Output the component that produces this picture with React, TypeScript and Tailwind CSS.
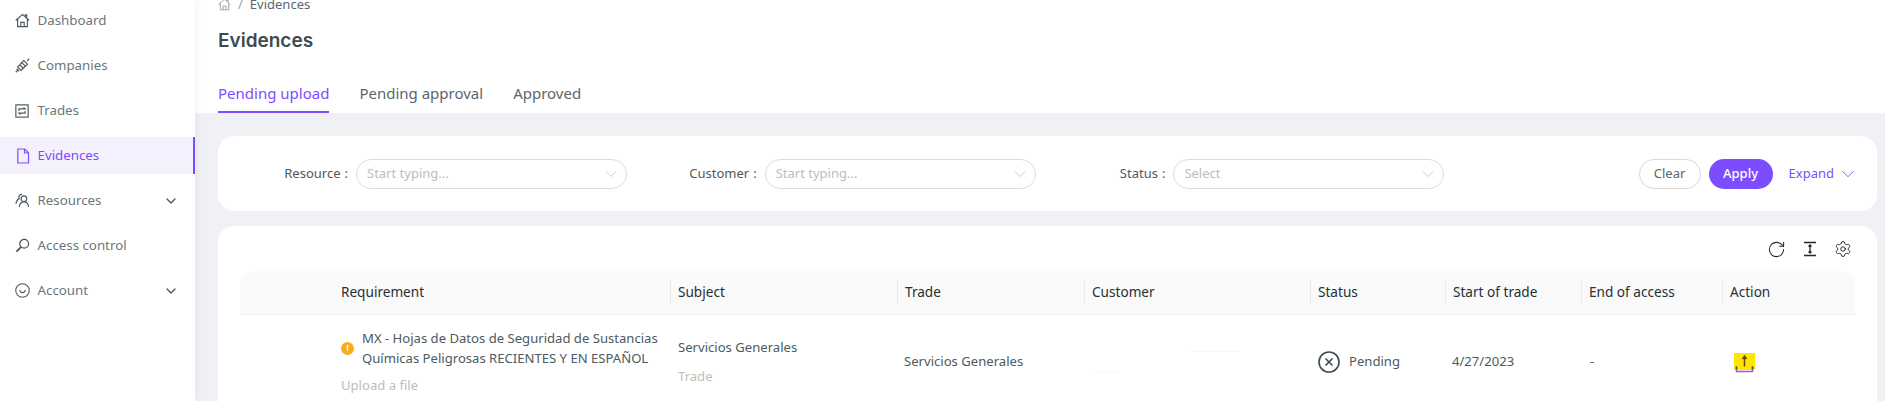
import { ChevronDown, RotateCw, Settings } from "lucide-react";

const font = "font-['Noto_Sans','Open_Sans',sans-serif]";

const IconHome = ({ className }: { className?: string }) => (
  <svg viewBox="0 0 16 16" fill="none" stroke="currentColor" strokeWidth="1.2" className={className}>
    <path d="M.8 8 8 1.500 15.200 8M2.800 6.500V14.500h10.400V6.500M6.200 14.500V10h3.600v4.500M11 3.500V2h1.500v2.800" />
  </svg>
);

const IconPlug = () => (
  <svg viewBox="0 0 16 16" fill="none" stroke="currentColor" strokeWidth="1.300" className="h-[15px] w-[15px]">
    <path d="M.8 15.200 3 13M15.200.8 13 3M2.800 9.500l3.700 3.700 2.300-2.300-3.700-3.700zM7.200 5l3.800 3.800 2.200-2.200-3.800-3.800zM5.500 6.800 7.200 5M9 10.600l2-1.800M1.800 11.500l2.700 2.700" />
  </svg>
);

const IconTrades = () => (
  <svg viewBox="0 0 16 16" fill="none" stroke="currentColor" strokeWidth="1.300" className="h-[14px] w-[14px]">
    <rect x="1" y="1" width="14" height="14" />
    <path d="M4.500 8V5.500h7L9.800 4M11.500 8v2.500h-7L6.200 12" />
  </svg>
);

const IconFile = () => (
  <svg viewBox="0 0 16 16" fill="none" stroke="currentColor" strokeWidth="1.200" className="h-[16px] w-[16px]">
    <path d="M2.800 1h7L13.500 4.800V15H2.800zM9.500 1v4h4" />
  </svg>
);

const IconUser = () => (
  <svg viewBox="0 0 16 16" fill="none" stroke="currentColor" strokeWidth="1.200" className="h-[15px] w-[15px]">
    <circle cx="9.500" cy="6" r="3" />
    <path d="M4.500 15c.3-3 2.200-5.500 5-5.500s4.700 2.500 5 5.500M7.500 1.500A3 3 0 0 0 4.500 6c-2 1-3.200 3-3.500 5.500" />
  </svg>
);

const IconKey = () => (
  <svg viewBox="0 0 16 16" fill="none" stroke="currentColor" strokeWidth="1.300" className="h-[15px] w-[15px]">
    <circle cx="9.800" cy="6.200" r="4.700" />
    <path d="M6.300 9.700 1.500 14.500" strokeWidth="2" />
  </svg>
);

const IconSmile = () => (
  <svg viewBox="0 0 16 16" fill="none" stroke="currentColor" strokeWidth="1.100" className="h-[15px] w-[15px]">
    <circle cx="8" cy="8" r="7.200" />
    <path d="M4.800 7.500c.8 2 1.900 3 3.200 3s2.400-1 3.200-3" />
  </svg>
);

const nav = [
  { label: "Dashboard", icon: <IconHome className="h-[15px] w-[15px]" /> },
  { label: "Companies", icon: <IconPlug /> },
  { label: "Trades", icon: <IconTrades /> },
  { label: "Evidences", icon: <IconFile />, active: true },
  { label: "Resources", icon: <IconUser />, caret: true },
  { label: "Access control", icon: <IconKey /> },
  { label: "Account", icon: <IconSmile />, caret: true },
];

const Sidebar = () => (
  <aside className="relative z-10 flex h-[401px] w-[195px] shrink-0 flex-col gap-[8px] bg-white pt-[2px] text-[13.3px] text-[#6b767c] shadow-[2px_0_8px_rgba(0,0,0,0.05)]">
    {nav.map((item) => (
      <div
        key={item.label}
        className={
          item.active
            ? "flex h-[37px] items-center border-r-2 border-[#7c4dff] bg-[#f5f0fe] pl-[15px] pr-[14px] text-[#7c4dff]"
            : "flex h-[37px] items-center pl-[15px] pr-[16px]"
        }
      >
        <span className={item.active ? "flex w-[22.5px]" : "flex w-[22.5px] text-[#4a555c]"}>{item.icon}</span>
        <span className="flex-1">{item.label}</span>
        {item.caret && <ChevronDown className="h-[16px] w-[16px] text-[#4a555c]" />}
      </div>
    ))}
  </aside>
);

const Field = ({ label, placeholder }: { label: string; placeholder: string }) => (
  <div className="flex w-[408.7px] items-center">
    <span className="flex w-[116px] justify-end gap-[4px] pr-[8px] text-[13px] text-[#4d5a62]">
      <span>{label}</span>
      <span>:</span>
    </span>
    <div className="flex h-[30px] w-[271px] items-center justify-between rounded-full border border-[#dcdcdc] pl-[10px] pr-[5px] text-[13px] text-[#bdbdbd]">
      <span>{placeholder}</span>
      <ChevronDown strokeWidth={1} className="h-[20px] w-[20px] text-[#c4c4c4]" />
    </div>
  </div>
);

const columns = ["", "Requirement", "Subject", "Trade", "Customer", "Status", "Start of trade", "End of access", "Action"];

const gridCols = "grid grid-cols-[93px_337px_227px_187px_226px_135px_136px_141px_132px]";

const UploadIcon = () => (
  <div className="relative h-[17px] w-[21px] bg-[#ffe600]">
    <svg viewBox="0 0 21 20" fill="none" className="absolute left-0 top-0 h-[20px] w-[21px]">
      <path d="M2.500 13.500v5h16v-5" stroke="#8c5cff" strokeWidth="1.500" />
      <path d="M2.500 13.500v2.500M18.500 13.500v2.500" stroke="#6b4a00" strokeWidth="1.500" />
      <path d="M10.500 13.500V3M8.500 6l2-3 2 3" stroke="#6b4a00" strokeWidth="1.500" />
    </svg>
  </div>
);

export default function App() {
  return (
    <div className={`flex h-[401px] w-[1885px] overflow-hidden bg-[#f0f1f5] ${font}`}>
      <Sidebar />
      <main className="flex min-w-0 flex-1 flex-col">
        <header className="h-[113px] bg-white px-[23px]">
          <div className="flex h-[9px] items-center gap-[7px] text-[13px] text-[#5b666d]">
            <IconHome className="h-[13px] w-[13px] text-[#9aa1a6]" />
            <span className="text-[#9aa1a6]">/</span>
            <span>Evidences</span>
          </div>
          <h1 className="mt-[18px] h-[28px] font-['Inter',sans-serif] text-[19px] font-semibold leading-[28px] text-[#3d4a52]">
            Evidences
          </h1>
          <nav className="mt-[27px] flex gap-[30px] text-[15px] text-[#5b666d]">
            <span className="h-[31px] border-b-2 border-[#7c4dff] text-[#7c4dff]">Pending upload</span>
            <span>Pending approval</span>
            <span>Approved</span>
          </nav>
        </header>

        <div className="flex flex-col gap-[15px] pl-[23px] pr-[8px] pt-[23px]">
          <section className="flex h-[75px] items-center rounded-[16px] bg-white pl-[22px] pr-[18px]">
            <Field label="Resource" placeholder="Start typing..." />
            <Field label="Customer" placeholder="Start typing..." />
            <Field label="Status" placeholder="Select" />
            <div className="ml-auto flex items-center text-[13px]">
              <button className="h-[30px] w-[62px] rounded-full border border-[#d9d9d9] text-[#5b666d]">Clear</button>
              <button className="ml-[8px] h-[30px] w-[64px] rounded-full bg-[#7c4dff] font-medium text-white">Apply</button>
              <span className="ml-[16px] text-[#7c4dff]">Expand</span>
              <ChevronDown strokeWidth={1} className="ml-[3px] h-[22px] w-[22px] text-[#7c4dff]" />
            </div>
          </section>

          <section className="h-[200px] rounded-[16px] bg-white px-[22px]">
            <div className="flex h-[45px] items-center justify-end gap-[16px] pr-[3.5px] pt-[1px] text-[#1f2a30]">
              <RotateCw strokeWidth={1.300} className="h-[19px] w-[19px]" />
              <svg viewBox="0 0 16 16" fill="none" stroke="currentColor" strokeWidth="1.300" className="h-[16px] w-[16px]">
                <path d="M2 1.500h12M2 14.500h12M8 4v8M6.500 5.500 8 4l1.500 1.500M6.500 10.500 8 12l1.500-1.500" />
              </svg>
              <Settings strokeWidth={1.300} className="h-[18px] w-[18px]" />
            </div>

            <div className={`${gridCols} h-[44px] items-center rounded-t-[14px] border-b border-[#eeeeee] bg-[#fafafa] text-[13.6px] text-[#262f35]`}>
              {columns.map((c, i) => (
                <div key={i} className={i > 1 ? "border-l border-[#ebebeb] py-[2px] pl-[7px]" : "pl-[8px]"}>
                  {c || "\u00a0"}
                </div>
              ))}
            </div>

            <div className={`${gridCols} items-center pt-[13px] text-[13.1px] text-[#4d5a62]`}>
              <div />
              <div className="pl-[8px]">
                <div className="flex items-center gap-[8px]">
                  <span className="flex h-[13px] w-[13px] shrink-0 items-center justify-center rounded-full bg-[#faad14] text-[9px] font-bold text-white">!</span>
                  <div className="whitespace-nowrap leading-[20px]">
                    MX - Hojas de Datos de Seguridad de Sustancias
                    <br />
                    Químicas Peligrosas RECIENTES Y EN ESPAÑOL
                  </div>
                </div>
                <div className="mt-[7px] leading-[20px] text-[#bdbdbd]">Upload a file</div>
              </div>
              <div className="pl-[8px]">
                <div className="leading-[20px]">Servicios Generales</div>
                <div className="mt-[9px] leading-[20px] text-[#bdbdbd]">Trade</div>
              </div>
              <div className="pl-[7px]">Servicios Generales</div>
              <div className="flex h-[21px] flex-col justify-between">
                <div className="ml-[106px] w-[47px] border-t border-dotted border-[#efefef]" />
                <div className="ml-[9px] w-[27px] border-t border-dotted border-[#efefef]" />
              </div>
              <div className="flex items-center gap-[9px] pl-[8px]">
                <svg viewBox="0 0 22 22" fill="none" stroke="#3d4a52" strokeWidth="1.600" className="h-[22px] w-[22px]">
                  <circle cx="11" cy="11" r="10" />
                  <path d="M7.500 7.500l7 7M14.500 7.500l-7 7" />
                </svg>
                <span>Pending</span>
              </div>
              <div className="pl-[7px]">4/27/2023</div>
              <div className="pl-[9px]">-</div>
              <div className="pl-[12px]">
                <UploadIcon />
              </div>
            </div>
          </section>
        </div>
      </main>
    </div>
  );
}
